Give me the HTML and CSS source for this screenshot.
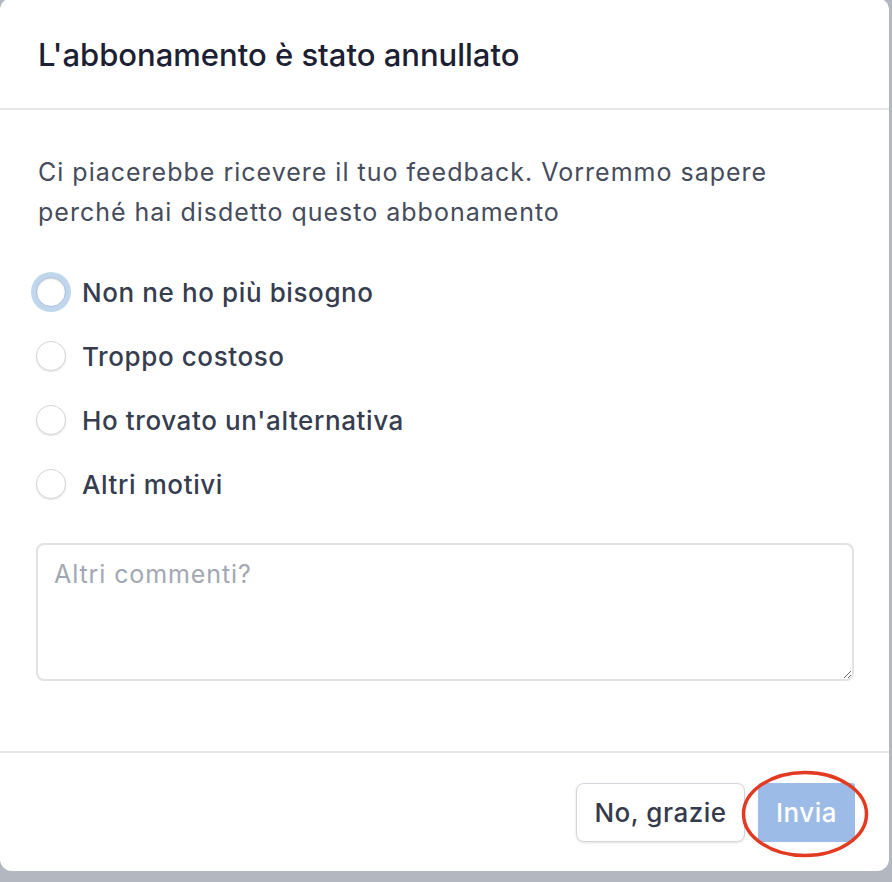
FILE: index.html
```html
<!DOCTYPE html>
<html lang="it">
<head>
<meta charset="utf-8">
<link rel="stylesheet" href="styles.css">
</head>
<body>
<div class="modal">
  <header class="modal-header">
    <h1 class="title">L'abbonamento è stato annullato</h1>
  </header>
  <section class="modal-body">
    <p class="intro">Ci piacerebbe ricevere il tuo feedback. Vorremmo sapere perché hai disdetto questo abbonamento</p>
    <div class="options">
      <label class="option"><span class="radio focused"></span><span>Non ne ho più bisogno</span></label>
      <label class="option"><span class="radio"></span><span>Troppo costoso</span></label>
      <label class="option"><span class="radio"></span><span>Ho trovato un'alternativa</span></label>
      <label class="option"><span class="radio"></span><span>Altri motivi</span></label>
    </div>
    <textarea class="comments" placeholder="Altri commenti?"></textarea>
  </section>
  <footer class="modal-footer">
    <button class="btn btn-secondary">No, grazie</button>
    <div class="submit-wrap">
      <button class="btn btn-primary">Invia</button>
      <svg class="highlight" width="128" height="88" viewBox="0 0 128 88"><ellipse cx="64" cy="44" rx="61.5" ry="41.5" fill="none" stroke="#e33b22" stroke-width="3.5"/></svg>
    </div>
  </footer>
</div>
</body>
</html>
```

FILE: styles.css
```css
* { box-sizing: border-box; }
html, body { margin: 0; padding: 0; }
body {
  background: #b3b7bf;
  width: 892px;
  height: 882px;
  overflow: hidden;
  font-family: Inter, "Noto Sans", sans-serif;
  color: #3b4252;
}
.modal {
  width: 889px;
  height: 873px;
  margin-top: -2px;
  background: #fff;
  border-radius: 12px;
  display: flex;
  flex-direction: column;
}
.modal-header {
  height: 112px;
  padding: 2px 38px 0;
  display: flex;
  align-items: center;
  border-bottom: 2px solid #e5e7eb;
  flex: none;
}
.title {
  margin: 0;
  font-size: 31px;
  font-weight: 500;
  color: #1c2033;
}
.modal-body {
  flex: 1;
  padding: 42px 35px 0 36px;
}
.intro {
  margin: 0 0 28px 2px;
  font-size: 25px;
  line-height: 40px;
  letter-spacing: 1px;
  color: #464c5b;
}
.options { display: flex; flex-direction: column; }
.option {
  height: 64px;
  display: flex;
  align-items: center;
  gap: 16px;
  font-size: 26px;
  letter-spacing: 0.6px;
  color: #363d4f;
  font-weight: 500;
}
.radio {
  width: 30px;
  height: 30px;
  border-radius: 50%;
  border: 1.5px solid #d4d6db;
  background: #fff;
  box-shadow: 0 1px 2px rgba(0,0,0,0.12);
  flex: none;
}
.radio.focused {
  border-color: #a9bfd8;
  box-shadow: 0 0 0 5px #c0d6ec, inset 0 1px 2px rgba(0,0,0,0.15);
}
.comments {
  display: block;
  margin-top: 27px;
  width: 818px;
  height: 138px;
  border: 2px solid #e0e2e6;
  border-radius: 8px;
  padding: 14px 16px;
  font-family: inherit;
  font-size: 25px;
  letter-spacing: 0.9px;
  color: #374151;
  resize: vertical;
  outline: none;
}
.comments::placeholder { color: #a2a8b3; }
.modal-footer {
  height: 120px;
  flex: none;
  border-top: 2px solid #e5e7eb;
  display: flex;
  align-items: center;
  justify-content: flex-end;
  gap: 13px;
  padding: 0 34px 0 0;
}
.btn {
  height: 59px;
  font-family: inherit;
  font-size: 26px;
  letter-spacing: 0.5px;
  font-weight: 500;
  border-radius: 8px;
  padding: 0;
}
.btn-secondary {
  width: 169px;
  background: #fff;
  border: 1.5px solid #d4d6db;
  color: #353b4d;
  box-shadow: 0 1px 3px rgba(0,0,0,0.12);
}
.btn-primary {
  width: 97px;
  background: #9cbbe6;
  border: none;
  color: #fff;
  border-radius: 3px;
}
.submit-wrap { position: relative; display: flex; }
.highlight {
  position: absolute;
  left: -17px;
  top: -13px;
  pointer-events: none;
}
```
